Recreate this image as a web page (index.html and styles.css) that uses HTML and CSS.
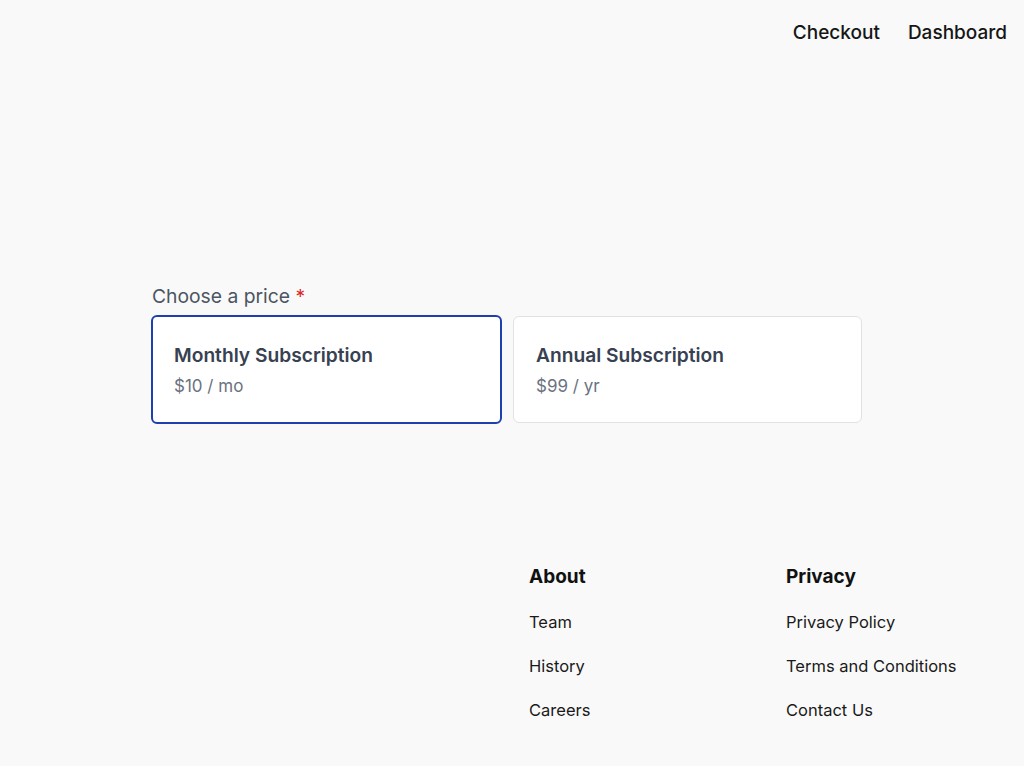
FILE: index.html
```html
<!DOCTYPE html>
<html>
<head>
<meta charset="utf-8">
<link rel="stylesheet" href="styles.css">
</head>
<body>
<header class="nav">
  <a class="nav-link" href="#">Checkout</a>
  <a class="nav-link" href="#">Dashboard</a>
</header>
<main class="main">
  <div class="field">
    <div class="label">Choose a price <span class="req">*</span></div>
    <div class="options">
      <div class="option selected">
        <div class="opt-title">Monthly Subscription</div>
        <div class="opt-price">$10 / mo</div>
      </div>
      <div class="option">
        <div class="opt-title">Annual Subscription</div>
        <div class="opt-price">$99 / yr</div>
      </div>
    </div>
  </div>
</main>
<footer class="footer">
  <div class="col">
    <h3 class="col-title">About</h3>
    <a class="col-link" href="#">Team</a>
    <a class="col-link" href="#">History</a>
    <a class="col-link" href="#">Careers</a>
  </div>
  <div class="col">
    <h3 class="col-title">Privacy</h3>
    <a class="col-link" href="#">Privacy Policy</a>
    <a class="col-link" href="#">Terms and Conditions</a>
    <a class="col-link" href="#">Contact Us</a>
  </div>
</footer>
</body>
</html>
```
FILE: styles.css
```css
html, body {
  margin: 0;
  padding: 0;
  background: #f9f9f9;
  font-family: Inter, "Noto Sans", sans-serif;
  color: #111;
}
a { text-decoration: none; color: inherit; }

.nav {
  display: flex;
  justify-content: flex-end;
  gap: 28px;
  padding: 21px 17px 0 0;
  height: 44px;
  box-sizing: border-box;
}
.nav-link {
  font-size: 19px;
  line-height: 24px;
  font-weight: 500;
  color: #161616;
}

.main {
  padding: 240px 0 0 151px;
}
.label {
  font-size: 19.3px;
  line-height: 24px;
  color: #4b5563;
  margin-left: 1px;
  margin-bottom: 7px;
}
.req { color: #dc2626; }
.options {
  display: flex;
  align-items: flex-start;
  gap: 11px;
}
.option {
  flex: none;
  width: 349px;
  height: 107px;
  box-sizing: border-box;
  background: #fff;
  border: 1px solid #e2e2e4;
  border-radius: 6px;
  padding: 26px 22px 0 22px;
  margin-top: 1px;
}
.option.selected {
  width: 351px;
  height: 109px;
  border: 2px solid #1e3fae;
  margin-top: 0;
  padding: 26px 21px 0 21px;
}
.opt-title {
  font-size: 19.2px;
  line-height: 24px;
  font-weight: 600;
  color: #374151;
}
.opt-price {
  font-size: 17px;
  line-height: 20px;
  color: #6b7280;
  margin-top: 9px;
}

.footer {
  display: flex;
  padding: 141px 0 0 529px;
}
.col {
  flex: none;
  width: 257px;
  display: flex;
  flex-direction: column;
}
.col-title {
  margin: 0 0 23px 0;
  font-size: 19px;
  line-height: 24px;
  font-weight: 700;
  color: #111;
}
.col-link {
  font-size: 16.5px;
  line-height: 20px;
  color: #1a1a1a;
  margin-bottom: 24px;
}
```
